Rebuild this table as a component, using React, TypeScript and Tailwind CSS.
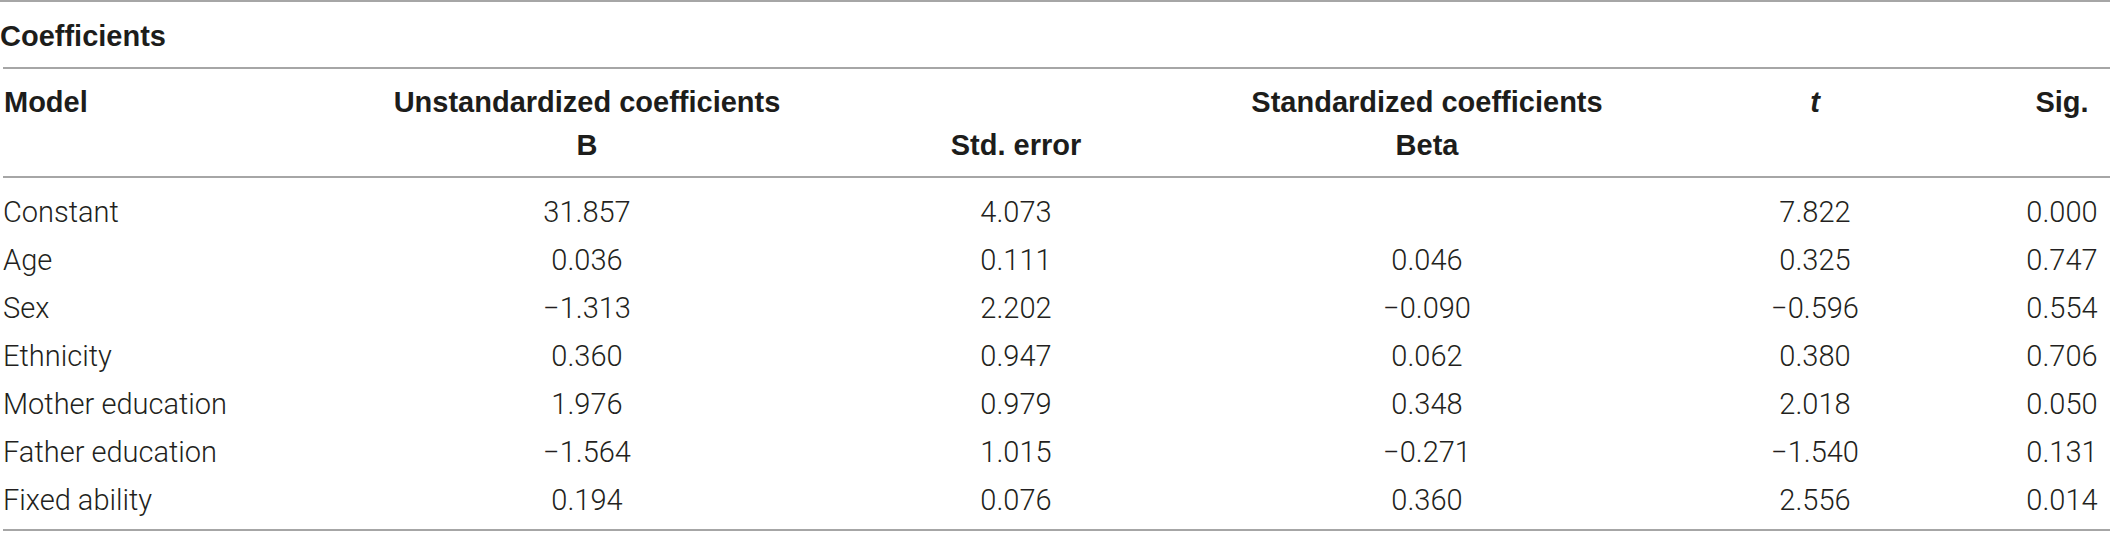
type Row = {
  label: string;
  b: string;
  se: string;
  beta: string;
  t: string;
  sig: string;
};

const rows: Row[] = [
  { label: "Constant", b: "31.857", se: "4.073", beta: "", t: "7.822", sig: "0.000" },
  { label: "Age", b: "0.036", se: "0.111", beta: "0.046", t: "0.325", sig: "0.747" },
  { label: "Sex", b: "\u22121.313", se: "2.202", beta: "\u22120.090", t: "\u22120.596", sig: "0.554" },
  { label: "Ethnicity", b: "0.360", se: "0.947", beta: "0.062", t: "0.380", sig: "0.706" },
  { label: "Mother education", b: "1.976", se: "0.979", beta: "0.348", t: "2.018", sig: "0.050" },
  { label: "Father education", b: "\u22121.564", se: "1.015", beta: "\u22120.271", t: "\u22121.540", sig: "0.131" },
  { label: "Fixed ability", b: "0.194", se: "0.076", beta: "0.360", t: "2.556", sig: "0.014" },
];

const cols = "grid grid-cols-[377px_414px_444px_378px_398px_96px]";

export default function App() {
  return (
    <div className="w-[2110px] h-[534px] bg-white text-[#231f20] overflow-hidden">
      <div className="border-t-2 border-[#a6a6a6] h-[67px] pt-[18px]">
        <p className="font-['Liberation_Sans',Arial,sans-serif] font-bold text-[29px] leading-[32px] text-[#1d1d1b]">
          Coefficients
        </p>
      </div>

      <div className="ml-[3px]">
        <div className="border-t-2 border-b-2 border-[#a6a6a6] pt-[12px] pb-[9px] font-['Liberation_Sans',Arial,sans-serif] font-bold text-[29px] leading-[43px] text-[#1d1d1b]">
          <div className={cols}>
            <div className="pl-px">Model</div>
            <div className="text-center whitespace-nowrap">Unstandardized coefficients</div>
            <div />
            <div className="text-center whitespace-nowrap">Standardized coefficients</div>
            <div className="text-center italic">t</div>
            <div className="text-center">Sig.</div>
          </div>
          <div className={cols}>
            <div />
            <div className="text-center">B</div>
            <div className="text-center">Std. error</div>
            <div className="text-center">Beta</div>
            <div />
            <div />
          </div>
        </div>

        <div className="border-b-2 border-[#a6a6a6] pt-[10px] pb-[5px] font-['Roboto',sans-serif] font-light text-[29px] leading-[48px]">
          {rows.map((r) => (
            <div key={r.label} className={cols}>
              <div>{r.label}</div>
              <div className="text-center">{r.b}</div>
              <div className="text-center">{r.se}</div>
              <div className="text-center">{r.beta}</div>
              <div className="text-center">{r.t}</div>
              <div className="text-center">{r.sig}</div>
            </div>
          ))}
        </div>
      </div>
    </div>
  );
}
